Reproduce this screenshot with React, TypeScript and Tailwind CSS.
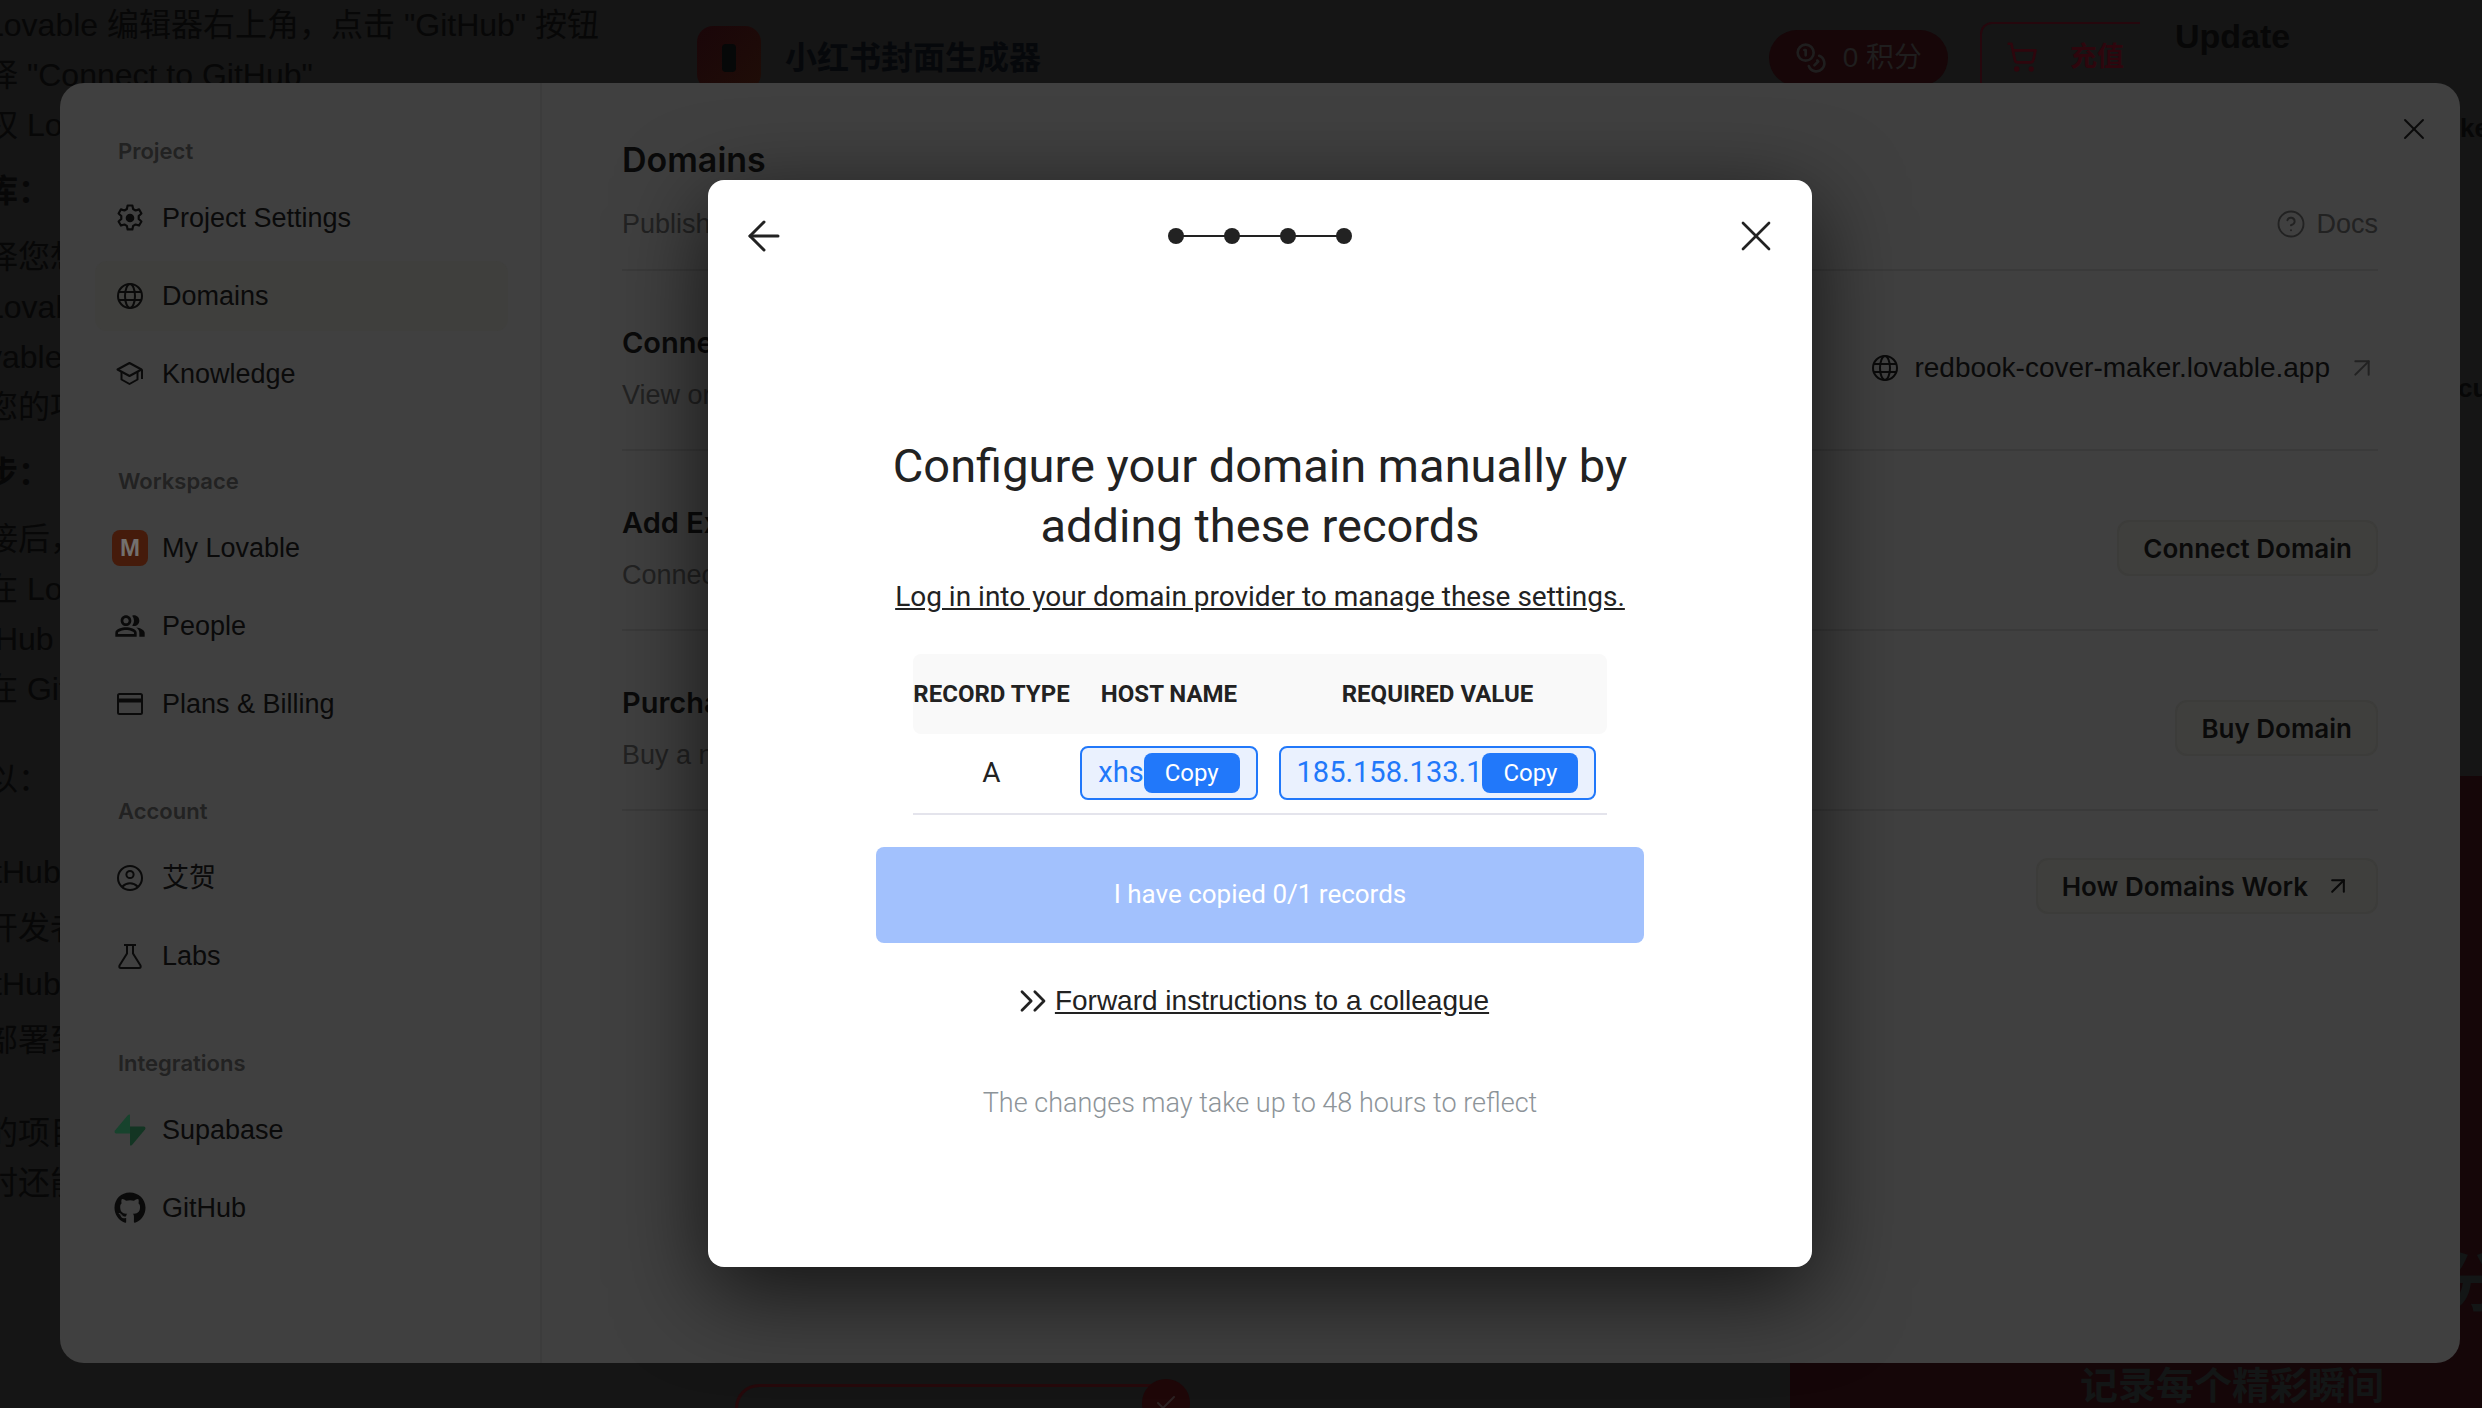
import React from 'react';
import { ArrowLeft, ArrowUpRight, Check, ChevronsRight, CircleHelp, Coins, ShoppingCart, X } from 'lucide-react';
import { FaGithub } from 'react-icons/fa';
import { MdOutlinePeopleAlt } from 'react-icons/md';

type IconProps = { className?: string };

const GearIcon = ({ className }: IconProps) => (
  <svg viewBox="0 0 26 26" fill="none" stroke="currentColor" strokeWidth="2" strokeLinejoin="round" className={className}>
    <path d="M10.8 1.4h4.4l.7 3.3 2.3 1.3 3.2-1 2.2 3.8-2.5 2.3v2.8l2.5 2.3-2.2 3.8-3.2-1-2.3 1.3-.7 3.3h-4.4l-.7-3.3L7.8 19l-3.2 1-2.2-3.8 2.5-2.3v-2.8L2.4 8.8 4.6 5l3.2 1 2.3-1.3z" />
    <circle cx="13" cy="13" r="4" fill="currentColor" stroke="none" />
  </svg>
);

const GlobeIcon = ({ className }: IconProps) => (
  <svg viewBox="0 0 26 26" fill="none" stroke="currentColor" strokeWidth="2" className={className}>
    <circle cx="13" cy="13" r="12" />
    <ellipse cx="13" cy="13" rx="5" ry="12" />
    <path d="M2 9h22M2 17h22" />
  </svg>
);

const KnowledgeIcon = ({ className }: IconProps) => (
  <svg viewBox="0 0 28 26" fill="none" stroke="currentColor" strokeWidth="2" strokeLinejoin="round" className={className}>
    <path d="M1.5 8.5 13.5 2l12 6.5-12 6.5z" />
    <path d="M5.5 11v7.5l8 4.5 8-4.5V11M26 8.5V18" />
  </svg>
);

const CardIcon = ({ className }: IconProps) => (
  <svg viewBox="0 0 26 26" fill="none" stroke="currentColor" strokeWidth="2" className={className}>
    <rect x="1" y="3" width="24" height="20" rx="1.5" />
    <path d="M1 9.5h24" strokeWidth="4" />
  </svg>
);

const AccountIcon = ({ className }: IconProps) => (
  <svg viewBox="0 0 26 26" fill="none" stroke="currentColor" strokeWidth="2" className={className}>
    <circle cx="13" cy="13" r="12" />
    <circle cx="13" cy="9.5" r="3.6" />
    <path d="M5.5 21.5c4-4.5 11-4.5 15 0" />
  </svg>
);

const FlaskIcon = ({ className }: IconProps) => (
  <svg viewBox="0 0 26 26" fill="none" stroke="currentColor" strokeWidth="2" strokeLinejoin="round" className={className}>
    <path d="M7 2h12M10 2v8.5L2.5 22.5q-.8 2.5 1.5 2.5h18q2.3 0 1.5-2.5L16 10.5V2" />
  </svg>
);

const SupabaseIcon = ({ className }: IconProps) => (
  <svg viewBox="0 0 32 32" className={className}>
    <path d="M16 .8v18.7H2.5c-1.8 0-2.5-1.7-1.5-3L14 1Q15.500 0 16 .8z" fill="#17432d" />
    <path d="M16 31.2V12.5h13.5c1.8 0 2.5 1.7 1.5 3L18 31q-1.5 1-2 .2z" fill="#133523" />
  </svg>
);

const TeamBadge = () => (
  <span className="flex size-9 items-center justify-center rounded-lg bg-[#451b0b] text-2xl font-semibold text-[#73706e]">M</span>
);

const GROUPS = [
  {
    label: 'Project',
    items: [
      { name: 'Project Settings', icon: <GearIcon className="size-7" /> },
      { name: 'Domains', icon: <GlobeIcon className="size-[26px]" />, active: true },
      { name: 'Knowledge', icon: <KnowledgeIcon className="h-[26px] w-7" /> },
    ],
  },
  {
    label: 'Workspace',
    items: [
      { name: 'My Lovable', icon: <TeamBadge /> },
      { name: 'People', icon: <MdOutlinePeopleAlt className="size-8" /> },
      { name: 'Plans & Billing', icon: <CardIcon className="size-[26px]" /> },
    ],
  },
  {
    label: 'Account',
    items: [
      { name: '艾贺', icon: <AccountIcon className="size-[26px]" /> },
      { name: 'Labs', icon: <FlaskIcon className="size-[26px]" /> },
    ],
  },
  {
    label: 'Integrations',
    items: [
      { name: 'Supabase', icon: <SupabaseIcon className="size-8" /> },
      { name: 'GitHub', icon: <FaGithub className="size-8" /> },
    ],
  },
];

// chat paragraphs that show beside the settings panel
const CHAT = [
  { lines: ['Lovable 编辑器右上角，点击 "GitHub" 按钮', '择 "Connect to GitHub"', '权 Lovable'] },
  { title: true, lines: ['库：'] },
  { lines: ['择您想', 'Lovable', 'vable', '您的项'] },
  { title: true, lines: ['步：'] },
  { lines: ['接后，', '在 Lovable', 'tHub', '在 GitHub'] },
  { gap: true, lines: ['以：'] },
  { gap: true, loose: true, lines: ['itHub', '开发者', 'itHub', '部署到'] },
  { gap: true, lines: ['的项目', '时还能'] },
];

const Backdrop = () => (
  <div className="absolute inset-0 flex overflow-hidden bg-[#151515] text-[#070707]" aria-hidden="true">
    <div className="-ml-3.5 w-[711px] shrink-0 space-y-4 text-[32px] whitespace-nowrap">
      {CHAT.map((p, i) => (
        <div key={i} className={`${p.gap ? 'pt-6' : ''} ${p.title ? 'font-bold' : ''} ${p.loose ? 'leading-[56px]' : 'leading-[50px]'}`}>
          {p.lines.map((line, j) => <p key={j}>{line}</p>)}
        </div>
      ))}
    </div>

    <div className="flex flex-1 flex-col justify-between">
      <div className="flex items-start justify-between pt-[22px]">
        <div className="flex items-center gap-6 pt-1">
          <span className="flex size-16 items-center justify-center rounded-2xl bg-gradient-to-br from-[#1a0609] to-[#1f0d07]">
            <span className="h-7 w-3.5 rounded-sm bg-[#060808]" />
          </span>
          <span className="text-[32px] font-bold text-[#06080b]">小红书封面生成器</span>
        </div>
        <div className="flex gap-8">
          <span className="mt-2 flex h-14 items-center gap-4 rounded-full bg-[#170608] px-[26px] text-[28px] text-[#1f1e1e]">
            <Coins className="size-8" />0 积分
          </span>
          <span className="flex h-[68px] w-40 items-center gap-8 rounded-tl-xl border-t-2 border-l-2 border-[#26070d] pl-6 text-[27px] font-bold text-[#2e060d]">
            <ShoppingCart className="size-8" />充值
          </span>
        </div>
      </div>
      <div className="relative ml-[38px] h-6 w-[446px] rounded-t-3xl border-t-[3px] border-r-[3px] border-l-[3px] border-[#26090b]">
        <span className="absolute -top-2 -right-3 flex size-12 items-center justify-center rounded-full bg-[#1f0708] text-[#2c2222]">
          <Check className="size-6" />
        </span>
      </div>
    </div>

    <div className="w-[342px] shrink-0 pt-2 font-bold whitespace-nowrap">
      <p className="pl-[35px] text-[34px] leading-[56px]">Update</p>
      <p className="mt-10 pl-80 text-[26px] leading-[48px]">ker</p>
      <p className="mt-[212px] pl-[318px] text-[26px] leading-[48px]">cus</p>
    </div>

    <div className="absolute right-0 bottom-0 flex h-[632px] w-[692px] flex-col justify-end bg-[#150608] font-bold whitespace-nowrap text-[#131616]">
      <p className="pl-[650px] text-[64px] leading-[64px]">分</p>
      <p className="mt-12 pr-[98px] text-right text-[38px] leading-[44px]">记录每个精彩瞬间</p>
    </div>
  </div>
);

const Sidebar = () => (
  <nav className="flex w-[482px] shrink-0 flex-col gap-14 border-r-2 border-[#3c3c3c] pt-[52px] pr-8 pl-[35px]">
    {GROUPS.map(group => (
      <div key={group.label}>
        <h2 className="mb-4 pl-[23px] font-[Inter] text-[22px] leading-8 font-semibold text-[#222222]">{group.label}</h2>
        <ul className="space-y-2">
          {group.items.map(item => (
            <li key={item.name}>
              <a
                href="#"
                className={`flex h-[70px] items-center gap-3.5 rounded-xl pl-[17px] text-[27px] ${item.active ? 'bg-[#3f3f3d]' : ''}`}
              >
                <span className="flex w-9 justify-center">{item.icon}</span>
                {item.name}
              </a>
            </li>
          ))}
        </ul>
      </div>
    ))}
  </nav>
);

interface RowProps {
  title: string;
  text: string;
  children: React.ReactNode;
}

const Row = ({ title, text, children }: RowProps) => (
  <section className="flex h-[180px] items-center justify-between border-b-2 border-[#3a3a3a] pt-4">
    <div className="pt-0.5">
      <h3 className="font-[Inter] text-[29px] leading-[52px] font-semibold">{title}</h3>
      <p className="text-[27px] leading-[52px] text-[#222222]">{text}</p>
    </div>
    {children}
  </section>
);

const OutlineButton = ({ children }: { children: React.ReactNode }) => (
  <button className="flex h-14 items-center gap-4 rounded-xl border-2 border-[#3c3c3a] bg-[#3f3f3d] px-6 font-[Inter] text-[26px] font-semibold">
    {children}
  </button>
);

const SettingsPanel = () => (
  <div className="relative flex flex-1 overflow-hidden rounded-3xl bg-[#404040] text-[#0a0a0a]">
    <Sidebar />
    <main className="flex-1 pt-[52px] pr-[82px] pl-20">
      <h1 className="font-[Inter] text-[34px] leading-[50px] font-semibold">Domains</h1>
      <div className="flex h-[86px] items-center justify-between border-b-2 border-[#3a3a3a] pb-1.5 text-[27px] text-[#222222]">
        <p>Publish your project to custom domains.</p>
        <a href="#" className="flex items-center gap-2.5">
          <CircleHelp className="size-[30px]" strokeWidth={1.5} />Docs
        </a>
      </div>
      <Row title="Connected Domains" text="View or manage your domains.">
        <a href="#" className="flex items-center gap-4 text-[28px]">
          <GlobeIcon className="size-[26px]" />
          redbook-cover-maker.lovable.app
          <ArrowUpRight className="size-8 text-[#222222]" strokeWidth={1.5} />
        </a>
      </Row>
      <Row title="Add Existing Domain" text="Connect a domain you already own.">
        <OutlineButton>Connect Domain</OutlineButton>
      </Row>
      <Row title="Purchase New Domain" text="Buy a new domain through Lovable.">
        <OutlineButton>Buy Domain</OutlineButton>
      </Row>
      <div className="flex justify-end pt-[47px]">
        <OutlineButton>
          How Domains Work <ArrowUpRight className="size-7" strokeWidth={1.75} />
        </OutlineButton>
      </div>
    </main>
    <button className="absolute top-7 right-7" aria-label="Close settings">
      <X className="size-9" strokeWidth={1.25} />
    </button>
  </div>
);

const Steps = () => (
  <svg viewBox="0 0 184 16" className="h-4 w-[184px]" fill="#222222">
    <path d="M8 8h168" stroke="#222222" strokeWidth="2" />
    {[8, 64, 120, 176].map(x => <circle key={x} cx={x} cy="8" r="8" />)}
  </svg>
);

const CopyField = ({ value }: { value: string }) => (
  <div className="inline-flex h-[54px] items-center rounded-lg border-2 border-[#2178fa] bg-[#eaf1fe] px-4 align-middle text-[29px] text-[#2178fa]">
    {value}
    <button className="h-10 w-24 rounded-lg bg-[#2178fa] text-2xl text-white">Copy</button>
  </div>
);

const RecordsDialog = () => (
  <div
    role="dialog"
    aria-label="Configure your domain"
    className="w-[1104px] rounded-2xl bg-white px-9 pt-10 pb-36 text-center font-[Roboto] text-[#222222] shadow-[0_24px_90px_rgba(0,0,0,0.7)]"
  >
    <header className="flex h-8 items-center justify-between">
      <button aria-label="Back" className="mr-0.5 -ml-1"><ArrowLeft className="size-12" strokeWidth={1.5} /></button>
      <Steps />
      <button aria-label="Close" className="-mr-1.5"><X className="size-13" strokeWidth={1.25} /></button>
    </header>

    <div className="mx-auto flex w-[768px] flex-col items-center pt-[184px]">
      <h2 className="text-[47px] leading-[60px]">Configure your domain manually by adding these records</h2>
      <a href="#" className="mt-[21px] text-[28px] leading-10 underline">Log in into your domain provider to manage these settings.</a>

      <table className="mt-[37px] w-[694px] table-fixed border-collapse">
        <thead>
          <tr className="h-20 text-2xl font-semibold">
            <th className="w-[157px] rounded-l-lg bg-[#f9f9f9] whitespace-nowrap">RECORD TYPE</th>
            <th className="w-[198px] bg-[#f9f9f9]">HOST NAME</th>
            <th className="rounded-r-lg bg-[#f9f9f9]">REQUIRED VALUE</th>
          </tr>
        </thead>
        <tbody>
          <tr className="h-20 border-b-2 border-[#e4e4ec] text-[28px]">
            <td>A</td>
            <td><CopyField value="xhs" /></td>
            <td><CopyField value="185.158.133.1" /></td>
          </tr>
        </tbody>
      </table>

      <button disabled className="mt-8 h-24 w-full rounded-lg bg-[#a2c1fd] text-[26px] text-white">
        I have copied 0/1 records
      </button>
      <a href="#" className="mt-[38px] flex h-10 items-center pr-5 font-['Liberation_Sans'] text-[28px] leading-10">
        <ChevronsRight className="size-11" strokeWidth={1.5} />
        <span className="underline">Forward instructions to a colleague</span>
      </a>
      <p className="mt-[62px] text-[27px] leading-10 font-light text-[#8d9499]">The changes may take up to 48 hours to reflect</p>
    </div>
  </div>
);

export default function App() {
  return (
    <div className="relative flex min-h-screen overflow-hidden pt-[83px] pr-[22px] pb-[45px] pl-[60px] font-['Liberation_Sans','Noto_Sans_CJK_SC',sans-serif]">
      <Backdrop />
      <SettingsPanel />
      <div className="absolute inset-0 flex items-center justify-center pt-[38px] pl-[38px]">
        <RecordsDialog />
      </div>
    </div>
  );
}
